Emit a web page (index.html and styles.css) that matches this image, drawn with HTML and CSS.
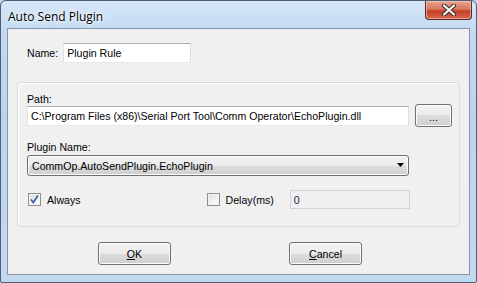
FILE: index.html
```html
<!DOCTYPE html>
<html lang="en">
<head>
    <meta charset="UTF-8">
    <title>Auto Send Plugin</title>
    <link rel="stylesheet" href="styles.css">
</head>
<body>
    <div class="window">
        <!-- Title bar -->
        <div class="titlebar">
            <div class="title">Auto Send Plugin</div>
            <div class="close-btn">
                <svg width="16" height="12" viewBox="0 0 16 12">
                    <path d="M3 1.5 L13 10.5 M13 1.5 L3 10.5" stroke="#3b2a2a" stroke-width="4.2" stroke-linecap="round"/>
                    <path d="M3 1.5 L13 10.5 M13 1.5 L3 10.5" stroke="#ffffff" stroke-width="2.2" stroke-linecap="round"/>
                </svg>
            </div>
        </div>

        <!-- Client area -->
        <div class="client">
            <div class="name-row">
                <span class="label">Name:</span>
                <div class="textbox name-box">Plugin Rule</div>
            </div>

            <div class="group">
                <div class="label">Path:</div>
                <div class="path-row">
                    <div class="textbox path-box">C:\Program Files (x86)\Serial Port Tool\Comm Operator\EchoPlugin.dll</div>
                    <div class="button browse-btn">...</div>
                </div>

                <div class="label plugin-label">Plugin Name:</div>
                <div class="combo">
                    <span>CommOp.AutoSendPlugin.EchoPlugin</span>
                    <svg width="8" height="5" viewBox="0 0 8 5"><path d="M0 0 H7 L3.5 4 Z" fill="#000"/></svg>
                </div>

                <div class="check-row">
                    <div class="check-item">
                        <span class="checkbox">
                            <svg width="11" height="11" viewBox="0 0 11 11"><path d="M2 5.5 L4.3 8.5 L9 1.5" fill="none" stroke="#3a5fb0" stroke-width="1.8"/></svg>
                        </span>
                        <span>Always</span>
                    </div>
                    <div class="check-item delay-item">
                        <span class="checkbox"></span>
                        <span>Delay(ms)</span>
                    </div>
                    <div class="textbox delay-box">0</div>
                </div>
            </div>

            <div class="button-row">
                <div class="button dlg-btn"><u>O</u>K</div>
                <div class="button dlg-btn"><u>C</u>ancel</div>
            </div>
        </div>
    </div>
</body>
</html>
```

FILE: styles.css
```css
body {
    margin: 0;
    padding: 0;
    background-color: #bcd4ee;
    font-family: "Liberation Sans", Arial, sans-serif;
    font-size: 10.6px;
    color: #000;
}

.window {
    width: 477px;
    height: 283px;
    box-sizing: border-box;
    border: 1px solid #4f5f73;
    border-radius: 6px 6px 2px 2px;
    background: linear-gradient(180deg, #d6e7f8 0%, #c2d9f1 12%, #bcd4ee 40%, #c3d9f0 100%);
    display: flex;
    flex-direction: column;
    overflow: hidden;
}

.titlebar {
    height: 27px;
    display: flex;
    justify-content: space-between;
    align-items: flex-start;
}

.title {
    font-family: "Open Sans", "Noto Sans", sans-serif;
    font-size: 12px;
    padding: 7px 0 0 7px;
    color: #000;
    text-shadow: 0 0 6px #ffffff, 0 0 3px #ffffff;
}

.close-btn {
    width: 47px;
    height: 19px;
    margin-right: 4px;
    box-sizing: border-box;
    border: 1px solid #5a2a24;
    border-top: none;
    border-radius: 0 0 4px 4px;
    background: linear-gradient(180deg, #e8a393 0%, #d9785f 45%, #c4402a 55%, #d7674c 100%);
    box-shadow: inset 0 0 0 1px rgba(255, 220, 210, 0.5);
    display: flex;
    justify-content: center;
    align-items: center;
}

.client {
    flex: 1;
    margin: 0 6px 7px 6px;
    border: 1px solid #8596ab;
    background-color: #f0f0f0;
    display: flex;
    flex-direction: column;
}

.label {
    line-height: 13px;
}

.name-row {
    display: flex;
    align-items: center;
    margin: 14px 0 0 19px;
}

.textbox {
    box-sizing: border-box;
    height: 20px;
    padding: 0 3px;
    line-height: 18px;
    background-color: #fff;
    border: 1px solid;
    border-color: #abadb3 #dbdfe6 #e3e9ef #e2e3ea;
    white-space: nowrap;
    overflow: hidden;
}

.name-box {
    width: 128px;
    margin-left: 5px;
}

.group {
    margin: 19px 9px 0 9px;
    height: 145px;
    box-sizing: border-box;
    border: 1px solid #d5dfe5;
    border-radius: 3px;
    box-shadow: inset 1px 1px 0 #fff;
    padding: 10px 7px 0 9px;
}

.path-row {
    display: flex;
    align-items: center;
    gap: 6px;
    margin-top: -2px;
}

.path-box {
    width: 382px;
}

.button {
    box-sizing: border-box;
    border: 1px solid #707070;
    border-radius: 3px;
    background: linear-gradient(180deg, #f2f2f2 0%, #ebebeb 50%, #dddddd 50%, #cfcfcf 100%);
    box-shadow: inset 0 0 0 1px #fcfcfc;
    display: flex;
    justify-content: center;
    align-items: center;
}

.browse-btn {
    width: 37px;
    height: 23px;
    padding-top: 2px;
}

.plugin-label {
    margin-top: 14px;
}

.combo {
    box-sizing: border-box;
    width: 382px;
    height: 21px;
    margin-top: 1px;
    border: 1px solid #707070;
    border-radius: 3px;
    background: linear-gradient(180deg, #f2f2f2 0%, #ebebeb 50%, #dddddd 50%, #cfcfcf 100%);
    box-shadow: inset 0 0 0 1px #fcfcfc;
    display: flex;
    justify-content: space-between;
    align-items: center;
    padding: 0 3px 0 4px;
}

.check-row {
    display: flex;
    align-items: center;
    margin-top: 14px;
}

.check-item {
    display: flex;
    align-items: center;
    gap: 6px;
    padding-left: 1px;
}

.delay-item {
    margin-left: 125px;
}

.checkbox {
    box-sizing: border-box;
    width: 13px;
    height: 13px;
    border: 1px solid #8e8f8f;
    background: linear-gradient(135deg, #dcdcdc 0%, #f4f4f4 60%, #ffffff 100%);
    box-shadow: inset 0 0 0 1px #f4f4f4;
    display: flex;
    justify-content: center;
    align-items: center;
}

.delay-box {
    width: 120px;
    height: 19px;
    margin-left: 16px;
    background-color: #f0f0f0;
    border-color: #d2d2d2;
    color: #1a2a50;
}

.button-row {
    display: flex;
    margin: 15px 0 0 90px;
    gap: 118px;
}

.dlg-btn {
    width: 73px;
    height: 23px;
}
```
